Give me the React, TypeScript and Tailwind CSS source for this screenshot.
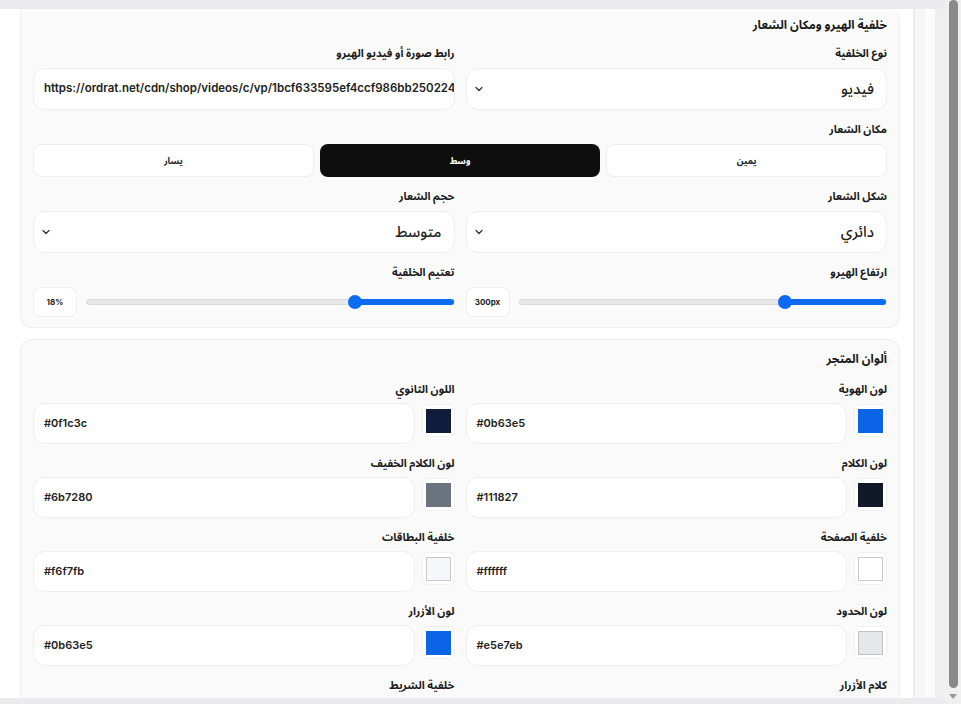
import { ChevronDown } from "lucide-react";
import type { ReactNode } from "react";

const font = "font-['Inter','Noto_Sans_Arabic','DejaVu_Sans',sans-serif]";

function Label({ children }: { children: ReactNode }) {
  return <div className="text-[11px] font-bold leading-4 text-[#1c1c1c] mb-[7px]">{children}</div>;
}

function SelectBox({ value }: { value: string }) {
  return (
    <div className="h-[42px] rounded-xl border border-[#eeeef0] bg-white flex items-center justify-between pr-[12px] pl-[6px]">
      <span className="text-[15px] font-medium text-[#222]">{value}</span>
      <ChevronDown size={12} strokeWidth={2.6} className="text-[#333]" />
    </div>
  );
}

function Slider({ value, fill }: { value: string; fill: number }) {
  return (
    <div className="flex items-center gap-[9px] h-[30px]">
      <div className="flex-1 relative h-[6px] rounded-full bg-[#e8e8ea] border border-[#d9d9dc]">
        <div className="absolute right-0 top-[-1px] bottom-[-1px] rounded-full bg-[#0b6cf2]" style={{ width: `${fill * 100}%` }} />
        <div className="absolute top-1/2 -translate-y-1/2 w-[14px] h-[14px] rounded-full bg-[#0b6cf2] translate-x-1/2" style={{ right: `${fill * 100}%` }} />
      </div>
      <div className="w-[44px] h-[30px] rounded-lg border border-[#eeeef0] bg-white flex items-center justify-center">
        <span dir="ltr" className="text-[8px] font-bold text-[#222]">{value}</span>
      </div>
    </div>
  );
}

function ColorField({ label, color, border }: { label: string; color: string; border?: string }) {
  return (
    <div>
      <div className="text-[11px] font-bold leading-4 text-[#1c1c1c] mb-[6px]">{label}</div>
      <div className="flex items-start gap-[7px]">
        <div className="mt-[1px] w-[33px] h-[33px] rounded-md border border-[#f0f0f2] bg-white flex items-center justify-center">
          <div className="w-[25px] h-[24px] border" style={{ backgroundColor: color, borderColor: border ?? color }} />
        </div>
        <div dir="ltr" className="flex-1 h-[41px] rounded-xl border border-[#eeeef0] bg-white flex items-center px-[10px] text-[11px] font-semibold text-[#222]">
          {color}
        </div>
      </div>
    </div>
  );
}

export default function App() {
  return (
    <div className={`w-[961px] h-[704px] overflow-hidden flex bg-white ${font}`}>
      <div className="flex-1 flex flex-col">
        <div className="h-[9px] bg-[#ebebee] shrink-0" />
        <div className="flex-1 flex overflow-hidden">
          <div className="w-[20px] shrink-0 bg-white" />
          <div dir="rtl" className="w-[880px] shrink-0 flex flex-col gap-[11px]">
            <section className="rounded-b-xl rounded-tr-xl border border-t-0 border-[#efeff1] bg-[#fafafb] px-3 pt-[7px] pb-[10px]">
              <h2 className="text-[12px] font-bold leading-[18px] mb-[11px] text-[#1a1a1a]">خلفية الهيرو ومكان الشعار</h2>
              <div className="grid grid-cols-2 gap-x-[11px] gap-y-[11px]">
                <div>
                  <Label>نوع الخلفية</Label>
                  <SelectBox value="فيديو" />
                </div>
                <div>
                  <Label>رابط صورة أو فيديو الهيرو</Label>
                  <div dir="ltr" className="h-[42px] rounded-xl border border-[#eeeef0] bg-white flex items-center px-[10px] text-[11.5px] font-semibold text-[#222] overflow-hidden whitespace-nowrap">
                    https://ordrat.net/cdn/shop/videos/c/vp/1bcf633595ef4ccf986bb250224
                  </div>
                </div>
                <div className="col-span-2">
                  <Label>مكان الشعار</Label>
                  <div className="grid grid-cols-3 gap-[6px]">
                    <div className="h-[33px] rounded-lg border border-[#eeeef0] bg-white flex items-center justify-center text-[9px] font-bold text-[#222]">يمين</div>
                    <div className="h-[33px] rounded-lg bg-[#0e0e0e] flex items-center justify-center text-[9px] font-bold text-white">وسط</div>
                    <div className="h-[33px] rounded-lg border border-[#eeeef0] bg-white flex items-center justify-center text-[9px] font-bold text-[#222]">يسار</div>
                  </div>
                </div>
                <div>
                  <Label>شكل الشعار</Label>
                  <SelectBox value="دائري" />
                </div>
                <div>
                  <Label>حجم الشعار</Label>
                  <SelectBox value="متوسط" />
                </div>
                <div>
                  <Label>ارتفاع الهيرو</Label>
                  <Slider value="300px" fill={0.276} />
                </div>
                <div>
                  <Label>تعتيم الخلفية</Label>
                  <Slider value="18%" fill={0.268} />
                </div>
              </div>
            </section>
            <section className="rounded-t-xl border border-b-0 border-[#efeff1] bg-[#fafafb] px-3 pt-[10px] flex-1">
              <h2 className="text-[12px] font-bold leading-[18px] mb-[13px] text-[#1a1a1a]">ألوان المتجر</h2>
              <div className="grid grid-cols-2 gap-x-[11px] gap-y-[11px]">
                <ColorField label="لون الهوية" color="#0b63e5" />
                <ColorField label="اللون الثانوي" color="#0f1c3c" />
                <ColorField label="لون الكلام" color="#111827" />
                <ColorField label="لون الكلام الخفيف" color="#6b7280" />
                <ColorField label="خلفية الصفحة" color="#ffffff" border="#c9c9cc" />
                <ColorField label="خلفية البطاقات" color="#f6f7fb" border="#c9c9cc" />
                <ColorField label="لون الحدود" color="#e5e7eb" border="#c2c2c6" />
                <ColorField label="لون الأزرار" color="#0b63e5" />
                <div className="text-[11px] font-bold leading-4 text-[#1c1c1c]">كلام الأزرار</div>
                <div className="text-[11px] font-bold leading-4 text-[#1c1c1c]">خلفية الشريط</div>
              </div>
            </section>
          </div>
          <div className="w-[13px] shrink-0 bg-white" />
          <div className="w-[2px] shrink-0 bg-[#ececef]" />
          <div className="w-[10px] shrink-0 bg-[#f6f6f8]" />
          <div className="w-[10px] shrink-0 bg-[#fbfbfc] rounded-tl-lg" />
          <div className="w-[10px] shrink-0 bg-[#efeff1]" />
        </div>
        <div className="h-[6px] bg-[#ebebee] shrink-0" />
      </div>
      <div className="w-[16px] shrink-0 bg-[#f0f0f0] flex flex-col items-center">
        <div className="w-[9px] h-[688px] rounded-full bg-[#8a8a8a]" />
        <div className="mt-[6px] w-0 h-0 border-l-[4px] border-r-[4px] border-t-[5px] border-l-transparent border-r-transparent border-t-[#9a9a9a]" />
      </div>
    </div>
  );
}
